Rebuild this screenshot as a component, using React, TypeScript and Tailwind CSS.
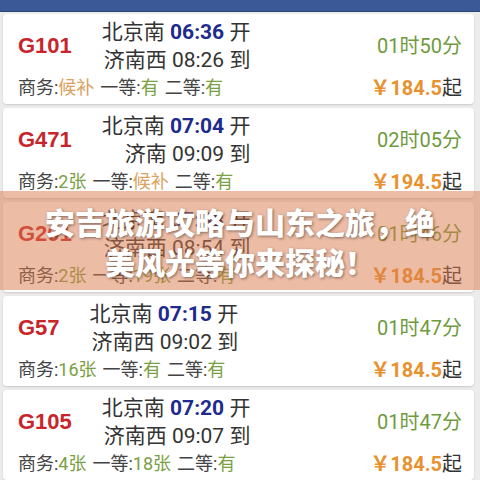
const trains = [
  {
    no: "G101",
    from: "北京南",
    dep: "06:36",
    to: "济南西",
    arr: "08:26",
    dur: "01时50分",
    price: "184.5",
    seats: [
      ["商务", "候补"],
      ["一等", "有"],
      ["二等", "有"],
    ],
  },
  {
    no: "G471",
    from: "北京南",
    dep: "07:04",
    to: "济南",
    arr: "09:09",
    dur: "02时05分",
    price: "194.5",
    seats: [
      ["商务", "2张"],
      ["一等", "候补"],
      ["二等", "有"],
    ],
  },
  {
    no: "G201",
    from: "北京南",
    dep: "07:08",
    to: "济南西",
    arr: "08:54",
    dur: "01时46分",
    price: "184.5",
    seats: [
      ["商务", "2张"],
      ["一等", "19张"],
      ["二等", "有"],
    ],
  },
  {
    no: "G57",
    from: "北京南",
    dep: "07:15",
    to: "济南西",
    arr: "09:02",
    dur: "01时47分",
    price: "184.5",
    seats: [
      ["商务", "16张"],
      ["一等", "有"],
      ["二等", "有"],
    ],
  },
  {
    no: "G105",
    from: "北京南",
    dep: "07:20",
    to: "济南西",
    arr: "09:07",
    dur: "01时47分",
    price: "184.5",
    seats: [
      ["商务", "4张"],
      ["一等", "18张"],
      ["二等", "有"],
    ],
  },
];

export default function App() {
  return (
    <div className="relative h-[480px] w-[480px] overflow-hidden bg-[#ececec] font-['Roboto','Noto_Sans_CJK_SC',sans-serif]">
      {/* top bar */}
      <div className="h-[12px] bg-[#3b5997] border-b border-[#2c4476]" />

      <div className="mt-[2px] ml-[3px] mr-[6px] flex flex-col gap-[4px]">
        {trains.map((t) => (
          <div
            key={t.no}
            className="h-[90px] shrink-0 rounded-[4px] bg-white pl-[15px] pr-[12px] pt-[4px] shadow-[0_1px_2px_rgba(0,0,0,0.15)]"
          >
            <div className="flex h-[56px] items-center">
              <div className="font-['Liberation_Sans','Noto_Sans_CJK_SC',sans-serif] text-[22px] font-bold leading-none text-[#c8242b]">
                {t.no}
              </div>
              <div className="ml-[30px] flex flex-col items-end text-[21px] leading-[28px] text-[#333]">
                <div>
                  {t.from} <span className="font-bold text-[#1e2b8c]">{t.dep}</span> 开
                </div>
                <div>
                  {t.to} {t.arr} 到
                </div>
              </div>
              <div className="ml-auto text-[20px] leading-none text-[#6f9a3d]">{t.dur}</div>
            </div>
            <div className="mt-[2px] flex h-[24px] items-center text-[18px] leading-none text-[#444]">
              <div className="flex gap-[6px]">
                {t.seats.map(([label, value]) => (
                  <span key={label}>
                    {label}:
                    <span className={value === "候补" ? "text-[#dba25e]" : "text-[#7aa043]"}>{value}</span>
                  </span>
                ))}
              </div>
              <div className="ml-auto text-[20px] text-[#333]">
                <span className="font-bold text-[#e8922f]">￥{t.price}</span>起
              </div>
            </div>
          </div>
        ))}
      </div>

      {/* title band */}
      <div className="absolute left-0 right-0 top-[191px] flex h-[99px] items-center justify-center bg-[#da7a4c]/50 px-[40px]">
        <div className="text-center font-['Noto_Sans_CJK_SC',sans-serif] text-[30px] font-black leading-[40px] text-white [text-shadow:1px_1px_3px_rgba(0,0,0,0.45)]">
          安吉旅游攻略与山东之旅，绝美风光等你来探秘！
        </div>
      </div>
    </div>
  );
}
